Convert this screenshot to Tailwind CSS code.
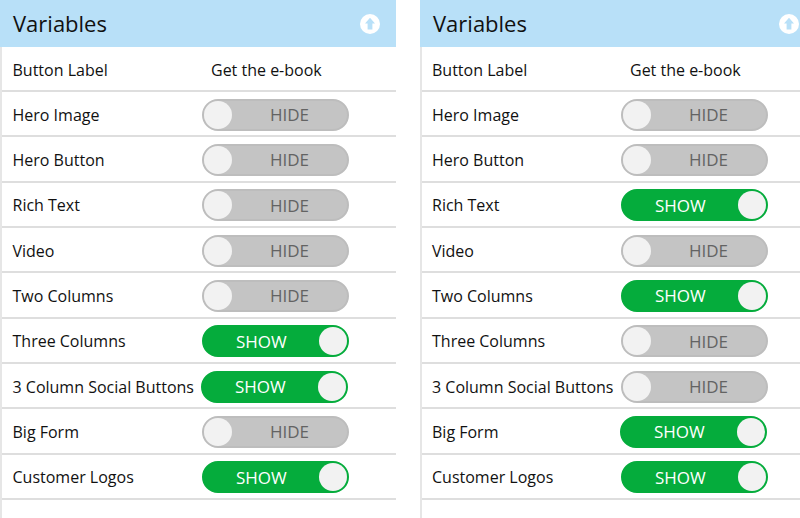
<!DOCTYPE html>
<html lang="en">
<head>
<meta charset="UTF-8">
<title>Variables</title>
<script src="https://cdn.jsdelivr.net/npm/@tailwindcss/browser@4"></script>
</head>
<body class="bg-white w-[800px] h-[518px] overflow-hidden font-['Open_Sans',sans-serif] text-[#111111]">
<div class="flex h-[518px]">

  <!-- left panel -->
  <section class="w-[396px] h-full border-l-2 border-[#e6e6e6]">
    <header class="h-[47px] -ml-[2px] bg-[#b8e0f8] flex items-center justify-between pl-[13px] pr-[16px]">
      <h2 class="text-[22px] leading-none mb-[2px]">Variables</h2>
      <svg width="20" height="20" viewBox="0 0 20 20"><circle cx="10" cy="10" r="10" fill="#fff"/><path d="M10 3.8 15 9.6H12.4V15.4H7.6V9.6H5Z" fill="#b8e0f8"/></svg>
    </header>
    <div class="h-[45px] pt-[2px] flex items-center border-b-2 border-[#dedede] pl-[10.5px] text-[16px]">
      <span class="w-[198.5px]">Button Label</span><span>Get the e-book</span>
    </div>
    <div class="h-[45.33px] pt-[2px] flex items-center border-b-2 border-[#dedede] pl-[10.5px] text-[16px]">
      <span class="w-[189.5px] whitespace-nowrap">Hero Image</span>
      <div class="w-[147px] h-[32px] rounded-full bg-[#c4c4c4] border-2 border-[#bdbdbd] flex items-center relative"><span class="absolute left-0 w-[28px] h-[28px] rounded-full bg-[#f2f2f2]"></span><span class="absolute left-[66px] text-[#636363] text-[17px]">HIDE</span></div>
    </div>
    <div class="h-[45.33px] pt-[2px] flex items-center border-b-2 border-[#dedede] pl-[10.5px] text-[16px]">
      <span class="w-[189.5px] whitespace-nowrap">Hero Button</span>
      <div class="w-[147px] h-[32px] rounded-full bg-[#c4c4c4] border-2 border-[#bdbdbd] flex items-center relative"><span class="absolute left-0 w-[28px] h-[28px] rounded-full bg-[#f2f2f2]"></span><span class="absolute left-[66px] text-[#636363] text-[17px]">HIDE</span></div>
    </div>
    <div class="h-[45.33px] pt-[2px] flex items-center border-b-2 border-[#dedede] pl-[10.5px] text-[16px]">
      <span class="w-[189.5px] whitespace-nowrap">Rich Text</span>
      <div class="w-[147px] h-[32px] rounded-full bg-[#c4c4c4] border-2 border-[#bdbdbd] flex items-center relative"><span class="absolute left-0 w-[28px] h-[28px] rounded-full bg-[#f2f2f2]"></span><span class="absolute left-[66px] text-[#636363] text-[17px]">HIDE</span></div>
    </div>
    <div class="h-[45.33px] pt-[2px] flex items-center border-b-2 border-[#dedede] pl-[10.5px] text-[16px]">
      <span class="w-[189.5px] whitespace-nowrap">Video</span>
      <div class="w-[147px] h-[32px] rounded-full bg-[#c4c4c4] border-2 border-[#bdbdbd] flex items-center relative"><span class="absolute left-0 w-[28px] h-[28px] rounded-full bg-[#f2f2f2]"></span><span class="absolute left-[66px] text-[#636363] text-[17px]">HIDE</span></div>
    </div>
    <div class="h-[45.33px] pt-[2px] flex items-center border-b-2 border-[#dedede] pl-[10.5px] text-[16px]">
      <span class="w-[189.5px] whitespace-nowrap">Two Columns</span>
      <div class="w-[147px] h-[32px] rounded-full bg-[#c4c4c4] border-2 border-[#bdbdbd] flex items-center relative"><span class="absolute left-0 w-[28px] h-[28px] rounded-full bg-[#f2f2f2]"></span><span class="absolute left-[66px] text-[#636363] text-[17px]">HIDE</span></div>
    </div>
    <div class="h-[45.33px] pt-[2px] flex items-center border-b-2 border-[#dedede] pl-[10.5px] text-[16px]">
      <span class="w-[189.5px] whitespace-nowrap">Three Columns</span>
      <div class="w-[147px] h-[32px] rounded-full bg-[#05ac3c] border-2 border-[#05ac3c] flex items-center relative"><span class="absolute right-0 w-[28px] h-[28px] rounded-full bg-[#f2f2f2]"></span><span class="absolute left-[32px] text-white text-[17px]">SHOW</span></div>
    </div>
    <div class="h-[45.33px] pt-[2px] flex items-center border-b-2 border-[#dedede] pl-[10.5px] text-[16px]">
      <span class="w-[188.5px] whitespace-nowrap">3 Column Social Buttons</span>
      <div class="w-[147px] h-[32px] rounded-full bg-[#05ac3c] border-2 border-[#05ac3c] flex items-center relative"><span class="absolute right-0 w-[28px] h-[28px] rounded-full bg-[#f2f2f2]"></span><span class="absolute left-[32px] text-white text-[17px]">SHOW</span></div>
    </div>
    <div class="h-[45.33px] pt-[2px] flex items-center border-b-2 border-[#dedede] pl-[10.5px] text-[16px]">
      <span class="w-[189.5px] whitespace-nowrap">Big Form</span>
      <div class="w-[147px] h-[32px] rounded-full bg-[#c4c4c4] border-2 border-[#bdbdbd] flex items-center relative"><span class="absolute left-0 w-[28px] h-[28px] rounded-full bg-[#f2f2f2]"></span><span class="absolute left-[66px] text-[#636363] text-[17px]">HIDE</span></div>
    </div>
    <div class="h-[45.33px] pt-[2px] flex items-center border-b-2 border-[#dedede] pl-[10.5px] text-[16px]">
      <span class="w-[189.5px] whitespace-nowrap">Customer Logos</span>
      <div class="w-[147px] h-[32px] rounded-full bg-[#05ac3c] border-2 border-[#05ac3c] flex items-center relative"><span class="absolute right-0 w-[28px] h-[28px] rounded-full bg-[#f2f2f2]"></span><span class="absolute left-[32px] text-white text-[17px]">SHOW</span></div>
    </div>
  </section>

  <!-- right panel -->
  <section class="w-[380px] ml-[24px] h-full border-l-2 border-[#e6e6e6]">
    <header class="h-[47px] -ml-[2px] bg-[#b8e0f8] flex items-center justify-between pl-[13px] pr-[1px]">
      <h2 class="text-[22px] leading-none mb-[2px]">Variables</h2>
      <svg width="20" height="20" viewBox="0 0 20 20"><circle cx="10" cy="10" r="10" fill="#fff"/><path d="M10 3.8 15 9.6H12.4V15.4H7.6V9.6H5Z" fill="#b8e0f8"/></svg>
    </header>
    <div class="h-[45px] pt-[2px] flex items-center border-b-2 border-[#dedede] pl-[10px] text-[16px]">
      <span class="w-[198px]">Button Label</span><span>Get the e-book</span>
    </div>
    <div class="h-[45.33px] pt-[2px] flex items-center border-b-2 border-[#dedede] pl-[10px] text-[16px]">
      <span class="w-[189px] whitespace-nowrap">Hero Image</span>
      <div class="w-[147px] h-[32px] rounded-full bg-[#c4c4c4] border-2 border-[#bdbdbd] flex items-center relative"><span class="absolute left-0 w-[28px] h-[28px] rounded-full bg-[#f2f2f2]"></span><span class="absolute left-[66px] text-[#636363] text-[17px]">HIDE</span></div>
    </div>
    <div class="h-[45.33px] pt-[2px] flex items-center border-b-2 border-[#dedede] pl-[10px] text-[16px]">
      <span class="w-[189px] whitespace-nowrap">Hero Button</span>
      <div class="w-[147px] h-[32px] rounded-full bg-[#c4c4c4] border-2 border-[#bdbdbd] flex items-center relative"><span class="absolute left-0 w-[28px] h-[28px] rounded-full bg-[#f2f2f2]"></span><span class="absolute left-[66px] text-[#636363] text-[17px]">HIDE</span></div>
    </div>
    <div class="h-[45.33px] pt-[2px] flex items-center border-b-2 border-[#dedede] pl-[10px] text-[16px]">
      <span class="w-[189px] whitespace-nowrap">Rich Text</span>
      <div class="w-[147px] h-[32px] rounded-full bg-[#05ac3c] border-2 border-[#05ac3c] flex items-center relative"><span class="absolute right-0 w-[28px] h-[28px] rounded-full bg-[#f2f2f2]"></span><span class="absolute left-[32px] text-white text-[17px]">SHOW</span></div>
    </div>
    <div class="h-[45.33px] pt-[2px] flex items-center border-b-2 border-[#dedede] pl-[10px] text-[16px]">
      <span class="w-[189px] whitespace-nowrap">Video</span>
      <div class="w-[147px] h-[32px] rounded-full bg-[#c4c4c4] border-2 border-[#bdbdbd] flex items-center relative"><span class="absolute left-0 w-[28px] h-[28px] rounded-full bg-[#f2f2f2]"></span><span class="absolute left-[66px] text-[#636363] text-[17px]">HIDE</span></div>
    </div>
    <div class="h-[45.33px] pt-[2px] flex items-center border-b-2 border-[#dedede] pl-[10px] text-[16px]">
      <span class="w-[189px] whitespace-nowrap">Two Columns</span>
      <div class="w-[147px] h-[32px] rounded-full bg-[#05ac3c] border-2 border-[#05ac3c] flex items-center relative"><span class="absolute right-0 w-[28px] h-[28px] rounded-full bg-[#f2f2f2]"></span><span class="absolute left-[32px] text-white text-[17px]">SHOW</span></div>
    </div>
    <div class="h-[45.33px] pt-[2px] flex items-center border-b-2 border-[#dedede] pl-[10px] text-[16px]">
      <span class="w-[189px] whitespace-nowrap">Three Columns</span>
      <div class="w-[147px] h-[32px] rounded-full bg-[#c4c4c4] border-2 border-[#bdbdbd] flex items-center relative"><span class="absolute left-0 w-[28px] h-[28px] rounded-full bg-[#f2f2f2]"></span><span class="absolute left-[66px] text-[#636363] text-[17px]">HIDE</span></div>
    </div>
    <div class="h-[45.33px] pt-[2px] flex items-center border-b-2 border-[#dedede] pl-[10px] text-[16px]">
      <span class="w-[189px] whitespace-nowrap">3 Column Social Buttons</span>
      <div class="w-[147px] h-[32px] rounded-full bg-[#c4c4c4] border-2 border-[#bdbdbd] flex items-center relative"><span class="absolute left-0 w-[28px] h-[28px] rounded-full bg-[#f2f2f2]"></span><span class="absolute left-[66px] text-[#636363] text-[17px]">HIDE</span></div>
    </div>
    <div class="h-[45.33px] pt-[2px] flex items-center border-b-2 border-[#dedede] pl-[10px] text-[16px]">
      <span class="w-[188px] whitespace-nowrap">Big Form</span>
      <div class="w-[147px] h-[32px] rounded-full bg-[#05ac3c] border-2 border-[#05ac3c] flex items-center relative"><span class="absolute right-0 w-[28px] h-[28px] rounded-full bg-[#f2f2f2]"></span><span class="absolute left-[32px] text-white text-[17px]">SHOW</span></div>
    </div>
    <div class="h-[45.33px] pt-[2px] flex items-center border-b-2 border-[#dedede] pl-[10px] text-[16px]">
      <span class="w-[189px] whitespace-nowrap">Customer Logos</span>
      <div class="w-[147px] h-[32px] rounded-full bg-[#05ac3c] border-2 border-[#05ac3c] flex items-center relative"><span class="absolute right-0 w-[28px] h-[28px] rounded-full bg-[#f2f2f2]"></span><span class="absolute left-[32px] text-white text-[17px]">SHOW</span></div>
    </div>
  </section>
</div>
</body>
</html>
